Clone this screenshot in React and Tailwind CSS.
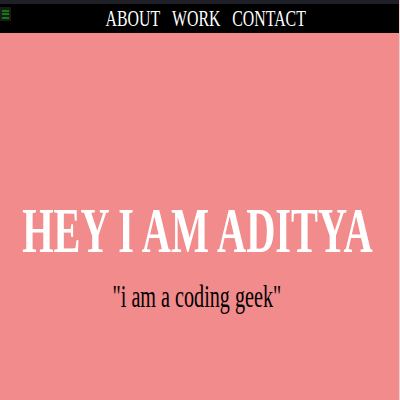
import React from "react";

const serif = { fontFamily: '"Liberation Serif", "Times New Roman", serif' };

export default function App() {
  const links = ["ABOUT", "WORK", "CONTACT"];

  return (
    <div className="w-[400px] h-[400px] overflow-hidden flex flex-col bg-[#f28b8b] border-r border-[#f6cfcf]" style={serif}>
      <div className="h-[4px] bg-[#1e1f27]" />

      {/* nav bar */}
      <nav className="relative h-[29px] bg-black flex justify-center pl-3">
        <button className="absolute left-0 top-[3px] w-[11px] h-[14px] bg-[#1a1a1a] flex flex-col justify-center gap-[1.5px] px-[2px]">
          <span className="block h-[2px] bg-[#0b7d0b]" />
          <span className="block h-[2px] bg-[#0b7d0b]" />
          <span className="block h-[2px] bg-[#0b7d0b]" />
        </button>
        <div className="inline-flex whitespace-nowrap scale-x-[0.66] text-white text-[24px] leading-[29px]">
          {links.map((l) => (
            <a key={l} className="mx-[9px]">
              {l}
            </a>
          ))}
        </div>
      </nav>

      {/* hero */}
      <main className="flex-1 flex flex-col items-center pt-[167px] pr-[5px]">
        <h1 className="whitespace-nowrap scale-x-[0.641] text-white font-bold text-[63px] leading-none">
          HEY I AM ADITYA
        </h1>
        <p className="mt-[17px] whitespace-nowrap scale-x-[0.63] text-black text-[32px] leading-none">
          "i am a coding geek"
        </p>
      </main>
    </div>
  );
}
